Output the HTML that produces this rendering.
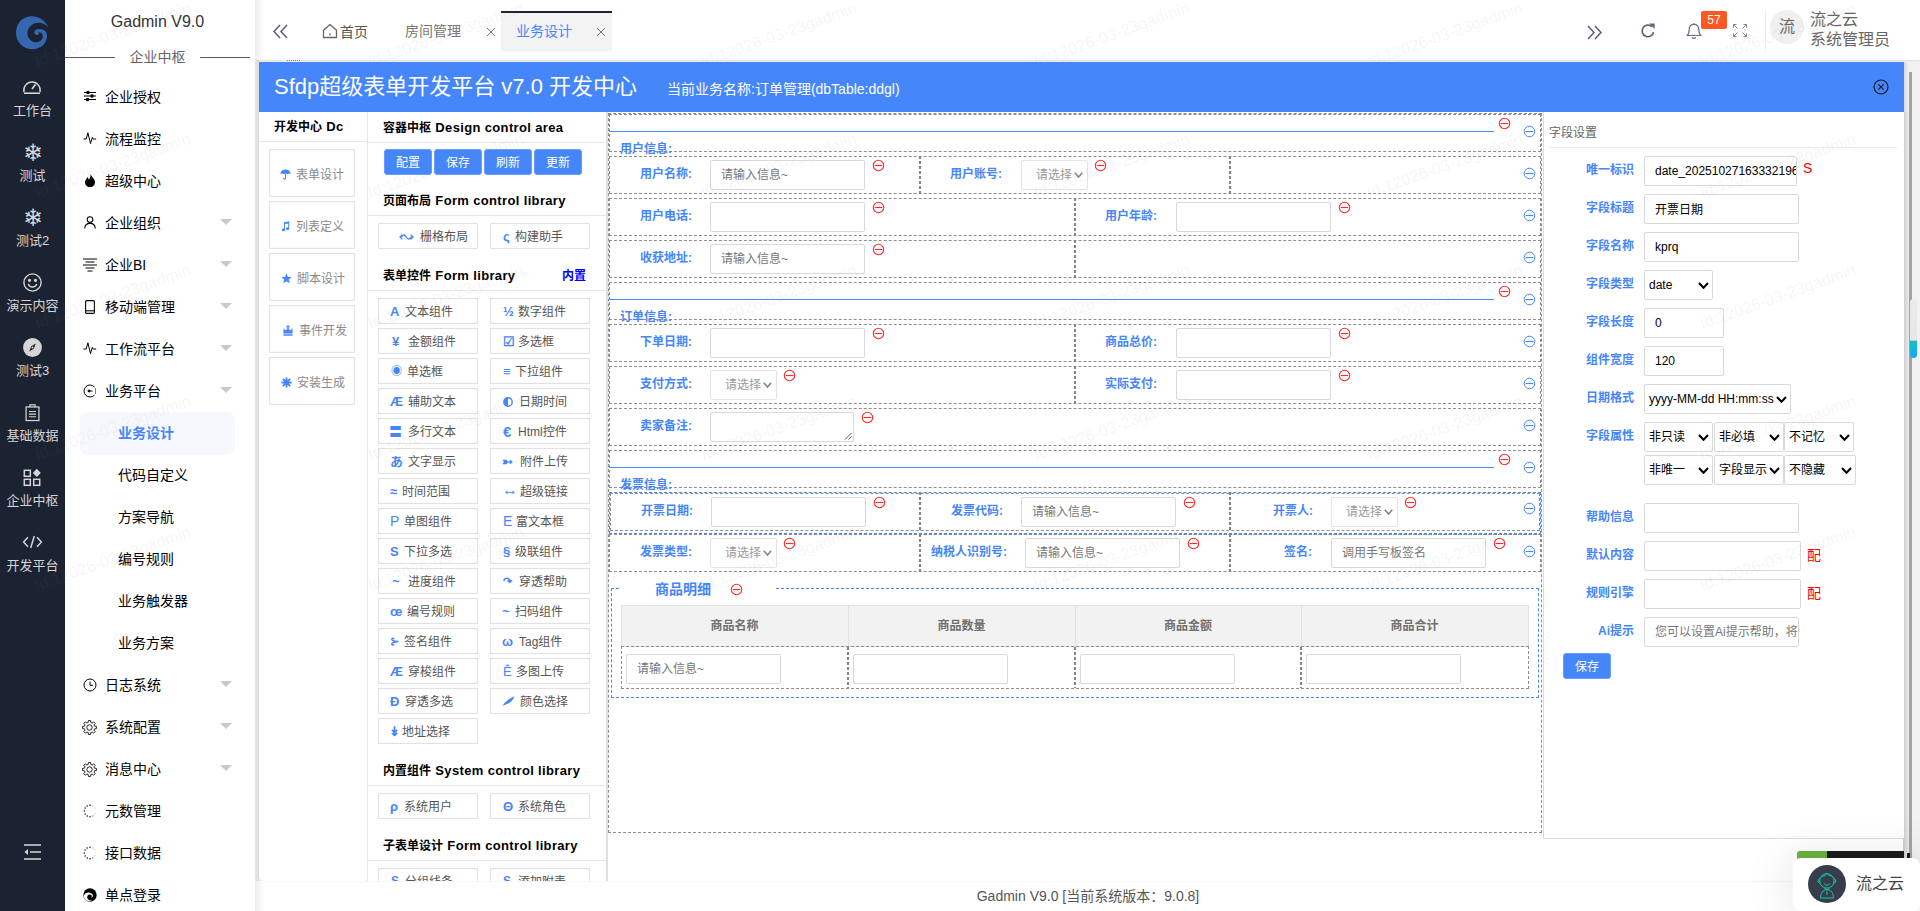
<!DOCTYPE html>
<html lang="zh-CN"><head><meta charset="utf-8"><title>Gadmin V9.0</title>
<style>
*{box-sizing:border-box;margin:0;padding:0}
html,body{width:1920px;height:911px;overflow:hidden;background:#fff}
body{position:relative;font-family:"Liberation Sans","Noto Sans CJK SC",sans-serif;font-size:14px;color:#333}
.abs{position:absolute}
#dark{position:absolute;left:0;top:0;width:65px;height:911px;background:#1b2232}
#dark .it{position:absolute;left:0;width:65px;text-align:center;color:#d6d6d6;font-size:13px;line-height:16px;white-space:nowrap}
#dark svg{position:absolute}
#side{position:absolute;left:65px;top:0;width:190px;height:911px;background:#fff}
#side .mi{position:absolute;left:40px;font-size:14px;color:#000;line-height:20px;white-space:nowrap}
#side .sub{position:absolute;left:53px;font-size:14px;color:#000;line-height:20px;white-space:nowrap}
#side .arr{position:absolute;left:155px;width:0;height:0;border-left:6px solid transparent;border-right:6px solid transparent;border-top:6px solid #c9c9c9}
#side svg{position:absolute}
.t{position:absolute;white-space:nowrap;line-height:1}
.b{font-weight:bold}
.blue{color:#4686fb}
.inp{position:absolute;height:30px;border:1px solid #d9d9d9;border-radius:2px;background:#fff;font-size:12px;color:#777;line-height:28px;padding-left:10px;white-space:nowrap;overflow:hidden}
.sel{position:absolute;height:30px;border:1px solid #e4e4e4;border-radius:2px;background:#fff;font-size:12px;color:#999;line-height:28px;padding-left:14px;white-space:nowrap;overflow:hidden}
.row{position:absolute;left:609px;width:932px;height:38px;border:1px dashed #8e8e8e}
.vsep{position:absolute;width:2px;background:repeating-linear-gradient(180deg,#858585 0,#858585 3px,transparent 3px,transparent 5px)}
.lab{position:absolute;font-size:12px;font-weight:bold;color:#4686fb;white-space:nowrap;line-height:16px;text-align:right}
.cmp{position:absolute;width:100px;height:26px;border:1px solid #e2e2e2;background:#fff;font-size:12px;color:#555;line-height:23px;white-space:nowrap;box-shadow:inset 0 0 2px rgba(0,0,0,.04)}
.cmp i{font-style:normal;color:#4686fb;position:absolute;left:0;top:1px;font-weight:bold}
.cmp span{position:absolute;top:2px}
.hd{position:absolute;font-size:12px;font-weight:bold;color:#000;white-space:nowrap;line-height:16px}
.hd b{font-size:13px;letter-spacing:.35px;margin-left:1px}
.hl{position:absolute;height:1px;background:#e6e6e6}
.card{position:absolute;left:269px;width:86px;height:48px;border:1px solid #e4e4e4;background:#fff;box-shadow:inset 0 0 3px rgba(0,0,0,.05);font-size:12px;color:#8a8a8a;line-height:50px;white-space:nowrap}
.btn{position:absolute;background:#4686fb;color:#fff;font-size:12px;text-align:center;border-radius:3px;white-space:nowrap}
.rl{position:absolute;font-size:12px;font-weight:bold;color:#4686fb;white-space:nowrap;line-height:16px;width:90px;text-align:right;left:1544px}
.ri{position:absolute;height:30px;border:1px solid #d9d9d9;border-radius:2px;background:#fff;font-size:12px;color:#000;line-height:28px;padding-left:10px;white-space:nowrap;overflow:hidden}
.rs{position:absolute;height:30px;border:1px solid #d9d9d9;border-radius:2px;background:#fff;font-size:12px;color:#000;line-height:28px;padding-left:4px;white-space:nowrap;overflow:hidden}
.wm{position:absolute;font-size:16.3px;color:rgba(140,140,140,.085);transform:rotate(-19.5deg);transform-origin:left bottom;white-space:nowrap;pointer-events:none;line-height:1}
</style></head>
<body>
<div id="dark">
<svg style="left:8px;top:8px" width="50" height="50" viewBox="0 0 50 50"><path d="M40.3 19.2 C37.5 12.5 30.5 8.2 24.1 8.2 C14.5 8.2 8 15.5 8 24.7 C8 34 15 41.2 24.7 41.2 C32 41.2 37.5 36.5 38.9 30 C39.6 26.5 38.5 24 36.5 22.5 C34 20.8 30.5 20.5 28.3 21.6 C26.3 22.6 25.6 24.6 26.8 26 C28 27.3 30.6 27.2 31 25.6 C31.2 24.8 30.6 24.3 29.9 24.1 C31.5 23.6 33.5 24.6 34.4 26.5 C35.6 29.2 34.2 32.2 31.2 33.6 C27.5 35.3 23.3 33.8 21 30.5 C18.6 27 19 22.2 21.8 18.8 C24.8 15.2 30 13.9 34.6 15.5 C37 16.3 39 17.8 40.3 19.2 Z" fill="#3567b0"/></svg>
<svg style="left:22px;top:78px" width="20" height="18" viewBox="0 0 20 18" fill="none" stroke="#d6d6d6" stroke-width="1.4"><path d="M2 14 A8.2 8.2 0 1 1 18 14"/><path d="M2 15.2 H18" stroke-width="1.6"/><path d="M10 11 L13.5 6.5" stroke-width="1.8"/></svg>
<div class="it" style="top:103px">工作台</div>
<div class="it" style="top:141px;font-size:24px;line-height:24px">&#10052;</div>
<div class="it" style="top:168px">测试</div>
<div class="it" style="top:206px;font-size:24px;line-height:24px">&#10052;</div>
<div class="it" style="top:233px">测试2</div>
<svg style="left:22px;top:272px" width="21" height="21" viewBox="0 0 21 21" fill="none" stroke="#d6d6d6" stroke-width="1.4"><circle cx="10.5" cy="10.5" r="8.6"/><circle cx="7.5" cy="8.3" r="0.9" fill="#d6d6d6"/><circle cx="13.5" cy="8.3" r="0.9" fill="#d6d6d6"/><path d="M6.2 12 A4.6 4.6 0 0 0 14.8 12"/></svg>
<div class="it" style="top:298px">演示内容</div>
<svg style="left:22px;top:337px" width="21" height="21" viewBox="0 0 21 21"><circle cx="10.5" cy="10.5" r="9.4" fill="#d6d6d6"/><path d="M13.8 6.5 L11.8 11.8 L7.2 14.5 L9.2 9.2 Z" fill="#1b2232"/><circle cx="10.5" cy="10.5" r="1" fill="#d6d6d6"/></svg>
<div class="it" style="top:363px">测试3</div>
<svg style="left:25px;top:404px" width="15" height="17.6" viewBox="0 0 17 20" fill="none" stroke="#d6d6d6" stroke-width="1.4"><rect x="1.2" y="3.4" width="14.6" height="15.4"/><path d="M5.5 3.4 V1 H11.5 V3.4"/><path d="M4.5 8.5 H12.5 M4.5 11.5 H12.5 M4.5 14.5 H12.5" stroke-width="1.2"/></svg>
<div class="it" style="top:428px">基础数据</div>
<svg style="left:23px;top:468px" width="19" height="19" viewBox="0 0 19 19" fill="none" stroke="#d6d6d6" stroke-width="1.5"><rect x="1.3" y="2.3" width="6" height="6"/><rect x="1.3" y="11.3" width="6" height="6"/><rect x="10.7" y="11.3" width="6" height="6"/><path d="M13.8 0.8 L17.8 4.9 L13.8 9 L9.8 4.9 Z" fill="#d6d6d6" stroke="none"/></svg>
<div class="it" style="top:493px">企业中枢</div>
<svg style="left:22px;top:535px" width="21" height="14" viewBox="0 0 21 14" fill="none" stroke="#d6d6d6" stroke-width="1.5"><path d="M6 2.2 L1.6 7 L6 11.8"/><path d="M15 2.2 L19.4 7 L15 11.8"/><path d="M12.3 1 L8.7 13"/></svg>
<div class="it" style="top:558px">开发平台</div>
<svg style="left:23px;top:843px" width="19" height="18" viewBox="0 0 19 18" fill="none" stroke="#d6d6d6" stroke-width="1.6"><path d="M1 2 H18 M7 9 H18 M1 16 H18"/><path d="M5 6 L1.5 9 L5 12 Z" fill="#d6d6d6" stroke="none"/></svg>
</div>
<div id="side">
<div class="t" style="left:0;width:185px;text-align:center;top:13px;font-size:16px;color:#333;line-height:18px">Gadmin V9.0</div>
<div class="abs" style="left:0;top:57px;width:50px;height:1px;background:#555a66"></div>
<div class="abs" style="left:135px;top:57px;width:50px;height:1px;background:#555a66"></div>
<div class="t" style="left:0;width:185px;text-align:center;top:49px;font-size:14px;color:#666;line-height:16px">企业中枢</div>
<svg style="left:19px;top:90px" width="12" height="12" viewBox="0 0 12 12" fill="none" stroke="#000" stroke-width="1.1"><path d="M0 2.5 H12 M0 6 H12 M0 9.5 H12"/><circle cx="4" cy="2.5" r="1.2" fill="#000"/><circle cx="8" cy="6" r="1.2" fill="#000"/><circle cx="3.5" cy="9.5" r="1.2" fill="#000"/></svg>
<div class="mi" style="top:87px">企业授权</div>
<svg style="left:18px;top:132px" width="14" height="12" viewBox="0 0 14 12" fill="none" stroke="#000" stroke-width="1"><path d="M0.5 7 H3.2 L4.9 0.8 L7.5 11.6 L9.3 5.4 L10.2 7 H13.2"/></svg>
<div class="mi" style="top:129px">流程监控</div>
<svg style="left:19px;top:174px" width="12" height="13" viewBox="0 0 12 13"><path d="M6.5 0 C7.5 3 11 5 11 8.5 A5 4.7 0 0 1 1 8.5 C1 6 2.8 5 3.5 3 C4.3 4.2 4.6 5 4.8 5.8 C5.8 4 6.8 2.5 6.5 0 Z" fill="#000"/></svg>
<div class="mi" style="top:171px">超级中心</div>
<svg style="left:19px;top:216px" width="12" height="13" viewBox="0 0 12 13" fill="none" stroke="#000" stroke-width="1.1"><circle cx="6" cy="3.6" r="2.8"/><path d="M0.8 12.5 C0.8 8.5 3 7.4 6 7.4 C9 7.4 11.2 8.5 11.2 12.5"/></svg>
<div class="mi" style="top:213px">企业组织</div>
<div class="arr" style="top:219px"></div>
<svg style="left:18px;top:258px" width="14" height="14" viewBox="0 0 14 14" fill="none" stroke="#000" stroke-width="1"><path d="M0 1 H14 M2.5 4 H11.5 M0 7 H14 M2.5 10 H11.5 M4.5 13 H9.5"/></svg>
<div class="mi" style="top:255px">企业BI</div>
<div class="arr" style="top:261px"></div>
<svg style="left:20px;top:300px" width="10" height="14" viewBox="0 0 10 14" fill="none" stroke="#000" stroke-width="1.1"><rect x="0.6" y="0.6" width="8.8" height="12.8" rx="1.2"/><path d="M0.6 10.8 H9.4"/></svg>
<div class="mi" style="top:297px">移动端管理</div>
<div class="arr" style="top:303px"></div>
<svg style="left:18px;top:342px" width="14" height="12" viewBox="0 0 14 12" fill="none" stroke="#000" stroke-width="1"><path d="M0.5 7 H3.2 L4.9 0.8 L7.5 11.6 L9.3 5.4 L10.2 7 H13.2"/></svg>
<div class="mi" style="top:339px">工作流平台</div>
<div class="arr" style="top:345px"></div>
<svg style="left:18px;top:384px" width="14" height="14" viewBox="0 0 14 14" fill="none" stroke="#000" stroke-width="1"><path d="M11.5 3 A6 6 0 1 0 11.5 11" /><path d="M12.5 4.5 V9.5" stroke-dasharray="1 1"/><circle cx="6" cy="7" r="1" fill="#000"/><path d="M6 7 H9.5"/></svg>
<div class="mi" style="top:381px">业务平台</div>
<div class="arr" style="top:387px"></div>
<div class="abs" style="left:15px;top:412px;width:155px;height:43px;background:#f6f8fe;border-radius:8px"></div>
<div class="sub" style="top:423px;color:#4686fb;font-weight:bold">业务设计</div>
<div class="sub" style="top:465px;">代码自定义</div>
<div class="sub" style="top:507px;">方案导航</div>
<div class="sub" style="top:549px;">编号规则</div>
<div class="sub" style="top:591px;">业务触发器</div>
<div class="sub" style="top:633px;">业务方案</div>
<svg style="left:18px;top:678px" width="14" height="14" viewBox="0 0 14 14" fill="none" stroke="#000" stroke-width="1"><circle cx="7" cy="7" r="6"/><path d="M7 3.5 V7.3 H10"/></svg>
<div class="mi" style="top:675px">日志系统</div>
<div class="arr" style="top:681px"></div>
<svg style="left:17px;top:720px" width="15" height="15" viewBox="0 0 15 15" fill="none" stroke="#222" stroke-width="1" stroke-linejoin="round"><circle cx="7.5" cy="7.5" r="2.7"/><path d="M6.16 2.47 L6.38 0.59 L8.62 0.59 L8.84 2.47 L10.11 3.00 L11.60 1.82 L13.18 3.40 L12.00 4.89 L12.53 6.16 L14.41 6.38 L14.41 8.62 L12.53 8.84 L12.00 10.11 L13.18 11.60 L11.60 13.18 L10.11 12.00 L8.84 12.53 L8.62 14.41 L6.38 14.41 L6.16 12.53 L4.89 12.00 L3.40 13.18 L1.82 11.60 L3.00 10.11 L2.47 8.84 L0.59 8.62 L0.59 6.38 L2.47 6.16 L3.00 4.89 L1.82 3.40 L3.40 1.82 L4.89 3.00 Z"/></svg>
<div class="mi" style="top:717px">系统配置</div>
<div class="arr" style="top:723px"></div>
<svg style="left:17px;top:762px" width="15" height="15" viewBox="0 0 15 15" fill="none" stroke="#222" stroke-width="1" stroke-linejoin="round"><circle cx="7.5" cy="7.5" r="2.7"/><path d="M6.16 2.47 L6.38 0.59 L8.62 0.59 L8.84 2.47 L10.11 3.00 L11.60 1.82 L13.18 3.40 L12.00 4.89 L12.53 6.16 L14.41 6.38 L14.41 8.62 L12.53 8.84 L12.00 10.11 L13.18 11.60 L11.60 13.18 L10.11 12.00 L8.84 12.53 L8.62 14.41 L6.38 14.41 L6.16 12.53 L4.89 12.00 L3.40 13.18 L1.82 11.60 L3.00 10.11 L2.47 8.84 L0.59 8.62 L0.59 6.38 L2.47 6.16 L3.00 4.89 L1.82 3.40 L3.40 1.82 L4.89 3.00 Z"/></svg>
<div class="mi" style="top:759px">消息中心</div>
<div class="arr" style="top:765px"></div>
<svg style="left:18px;top:804px" width="14" height="14" viewBox="0 0 14 14"><g fill="#000"><circle cx="7.0" cy="1.3" r="0.75" opacity="1"/><circle cx="9.8" cy="2.1" r="0.75" opacity="0.25"/><circle cx="11.9" cy="4.1" r="0.75" opacity="0.15"/><circle cx="12.7" cy="7.0" r="0.75" opacity="0.1"/><circle cx="11.9" cy="9.8" r="0.75" opacity="0.2"/><circle cx="9.8" cy="11.9" r="0.75" opacity="0.5"/><circle cx="7.0" cy="12.7" r="0.75" opacity="1"/><circle cx="4.2" cy="11.9" r="0.75" opacity="1"/><circle cx="2.1" cy="9.9" r="0.75" opacity="1"/><circle cx="1.3" cy="7.0" r="0.75" opacity="1"/><circle cx="2.1" cy="4.1" r="0.75" opacity="1"/><circle cx="4.1" cy="2.1" r="0.75" opacity="1"/></g></svg>
<div class="mi" style="top:801px">元数管理</div>
<svg style="left:18px;top:846px" width="14" height="14" viewBox="0 0 14 14"><g fill="#000"><circle cx="7.0" cy="1.3" r="0.75" opacity="1"/><circle cx="9.8" cy="2.1" r="0.75" opacity="0.25"/><circle cx="11.9" cy="4.1" r="0.75" opacity="0.15"/><circle cx="12.7" cy="7.0" r="0.75" opacity="0.1"/><circle cx="11.9" cy="9.8" r="0.75" opacity="0.2"/><circle cx="9.8" cy="11.9" r="0.75" opacity="0.5"/><circle cx="7.0" cy="12.7" r="0.75" opacity="1"/><circle cx="4.2" cy="11.9" r="0.75" opacity="1"/><circle cx="2.1" cy="9.9" r="0.75" opacity="1"/><circle cx="1.3" cy="7.0" r="0.75" opacity="1"/><circle cx="2.1" cy="4.1" r="0.75" opacity="1"/><circle cx="4.1" cy="2.1" r="0.75" opacity="1"/></g></svg>
<div class="mi" style="top:843px">接口数据</div>
<svg style="left:18px;top:888px" width="14" height="14" viewBox="0 0 14 14"><circle cx="7" cy="7" r="6.7" fill="#000"/><path d="M0.8 7.6 C2 4.4 5.8 3.6 8.6 5.4 C10.6 6.8 10.2 9.4 8 9.8 C9.4 8.6 8.8 6.8 7 6.6 C4.8 6.4 3.6 8.6 4.6 10.6 C5.4 12.2 7.4 12.9 9.6 12.2 C6 14.6 0.4 12.2 0.8 7.6 Z" fill="#fff"/></svg>
<div class="mi" style="top:885px">单点登录</div>
</div>
<div class="abs" style="left:255px;top:60px;width:1665px;height:851px;background:#f2f2f2"></div>
<div class="abs" style="left:255px;top:60px;width:4px;height:821px;background:linear-gradient(90deg,#e6e6e6,#dcdcdc)"></div>
<div class="abs" style="left:256px;top:0;width:1664px;height:60px;background:#fff;box-shadow:0 1px 2px rgba(0,0,0,.08)"></div>
<div class="abs" style="left:255px;top:0;width:8px;height:60px;background:linear-gradient(90deg,#ececec,#fff)"></div>
<svg class="abs" style="left:272px;top:24px" width="17" height="15" viewBox="0 0 17 15" fill="none" stroke="#56607a" stroke-width="1.5"><path d="M8 1 L2 7.5 L8 14"/><path d="M15 1 L9 7.5 L15 14"/></svg>
<svg class="abs" style="left:322px;top:23px" width="16" height="16" viewBox="0 0 16 16" fill="none" stroke="#666" stroke-width="1.3"><path d="M1.5 7.2 L8 1.5 L14.5 7.2 V14.5 H1.5 Z" stroke-linejoin="round"/><path d="M8 10.5 V12.5"/></svg>
<div class="t" style="left:340px;top:24px;font-size:14px;color:#555;line-height:16px">首页</div>
<div class="t" style="left:405px;top:23px;font-size:14px;color:#777;line-height:16px">房间管理</div>
<svg class="abs" style="left:486px;top:27px" width="10" height="10" viewBox="0 0 10 10" stroke="#777" stroke-width="1"><path d="M1 1 L9 9 M9 1 L1 9"/></svg>
<div class="abs" style="left:501px;top:11px;width:111px;height:40px;background:#f3f3f3;border-top:2px solid #1b2232"></div>
<div class="t" style="left:516px;top:23px;font-size:14px;color:#4686fb;line-height:16px">业务设计</div>
<svg class="abs" style="left:596px;top:27px" width="10" height="10" viewBox="0 0 10 10" stroke="#777" stroke-width="1"><path d="M1 1 L9 9 M9 1 L1 9"/></svg>
<svg class="abs" style="left:1586px;top:25px" width="17" height="15" viewBox="0 0 17 15" fill="none" stroke="#56607a" stroke-width="1.5"><path d="M2 1 L8 7.5 L2 14"/><path d="M9 1 L15 7.5 L9 14"/></svg>
<svg class="abs" style="left:1640px;top:23px" width="16" height="16" viewBox="0 0 16 16" fill="none" stroke="#5a6478" stroke-width="1.7"><path d="M13.6 9.2 A5.8 5.8 0 1 1 11.8 3.6"/><path d="M9.2 0.6 H14.6 V6 Z" fill="#5a6478" stroke="none"/></svg>
<svg class="abs" style="left:1686px;top:22px" width="16" height="18" viewBox="0 0 16 18" fill="none" stroke="#66728a" stroke-width="1.2"><path d="M1 13.5 H15 C13 12 12.8 10.5 12.8 7.5 C12.8 4 10.8 2.3 8 2.3 C5.2 2.3 3.2 4 3.2 7.5 C3.2 10.5 3 12 1 13.5 Z" stroke-linejoin="round"/><path d="M6.3 15.3 A1.8 1.8 0 0 0 9.7 15.3"/><path d="M8 2.3 V1"/></svg>
<div class="abs" style="left:1701px;top:11px;width:26px;height:18px;background:#ff5722;border-radius:2px;color:#fff;font-size:12px;line-height:18px;text-align:center">57</div>
<svg class="abs" style="left:1733px;top:24px" width="14" height="13" viewBox="0 0 14 13" fill="none" stroke="#7b879c" stroke-width="1"><path d="M0.5 3.5 V0.5 H3.5 M0.5 0.5 L4.5 4.5 M10.5 0.5 H13.5 V3.5 M13.5 0.5 L9.5 4.5 M0.5 9.5 V12.5 H3.5 M0.5 12.5 L4.5 8.5 M13.5 9.5 V12.5 H10.5 M13.5 12.5 L9.5 8.5"/></svg>
<div class="abs" style="left:1765px;top:10px;width:1px;height:40px;background:#eee"></div>
<div class="abs" style="left:1770px;top:10px;width:34px;height:34px;border-radius:17px;background:#f0f0f0;color:#666;font-size:16px;line-height:34px;text-align:center">流</div>
<div class="t" style="left:1810px;top:11px;font-size:16px;color:#666;line-height:18px">流之云</div>
<div class="t" style="left:1810px;top:31px;font-size:16px;color:#666;line-height:18px">系统管理员</div>
<div class="abs" style="left:287px;top:60px;width:13px;height:0;border-top:1px dotted #4686fb"></div>
<div class="abs" style="left:259px;top:62px;width:1645px;height:819px;background:#fff;border-radius:0 0 0 6px"></div>
<div class="abs" style="left:259px;top:62px;width:1645px;height:50px;background:#4686fb"></div>
<div class="t" style="left:274px;top:74px;font-size:22px;color:#fff;line-height:26px">Sfdp超级表单开发平台 v7.0 开发中心</div>
<div class="t" style="left:667px;top:81px;font-size:14px;color:#fff;line-height:16px">当前业务名称:订单管理(dbTable:ddgl)</div>
<svg class="abs" style="left:1873px;top:79px" width="16" height="16" viewBox="0 0 16 16" fill="none" stroke="#10151f" stroke-width="1.1"><circle cx="8" cy="8" r="7"/><path d="M5.4 5.4 L10.6 10.6 M10.6 5.4 L5.4 10.6"/></svg>
<div class="abs" style="left:1903px;top:112px;width:6px;height:770px;background:linear-gradient(90deg,#c9c9c9,#ececec)"></div>
<div class="abs" style="left:1904px;top:62px;width:5px;height:50px;background:linear-gradient(90deg,#d8d8d8,#f2f2f2)"></div>
<div class="abs" style="left:1909px;top:72px;width:3px;height:810px;background:#a3a3a3"></div>
<div class="abs" style="left:1910px;top:299px;width:7px;height:59px;border-radius:4px;background:linear-gradient(180deg,#ececec 0,#e6e6e6 70%,#14c2bd 71%,#1aa6f5 100%)"></div>
<div class="abs" style="left:255px;top:881px;width:1665px;height:30px;background:#fff;border-top:1px solid #f6f6f6"></div>
<div class="abs" style="left:255px;top:881px;width:9px;height:30px;background:linear-gradient(90deg,#ececec,#fff)"></div>
<div class="t" style="left:256px;width:1664px;text-align:center;top:888px;font-size:14px;color:#555;line-height:16px">Gadmin V9.0 [当前系统版本：9.0.8]</div>
<div class="hd" style="left:274px;top:119px">开发中心 <b>Dc</b></div>
<div class="hl" style="left:259px;top:141px;width:108px"></div>
<div class="abs" style="left:367px;top:112px;width:1px;height:769px;background:#e6e6e6"></div>
<div class="card" style="top:149px"><svg style="position:absolute;left:10px;top:19px" width="11" height="11" viewBox="0 0 11 11"><path d="M0.3 5 C0.8 1.8 3 0.6 5.5 0.6 C8 0.6 10.2 1.8 10.7 5 C9.6 4.2 8.4 4.2 7.3 5 C6.6 4.3 4.4 4.3 3.7 5 C2.6 4.2 1.4 4.2 0.3 5 Z" fill="#4686fb"/><path d="M5.5 4.5 V9 C5.5 10.4 3.6 10.4 3.6 9" fill="none" stroke="#4686fb" stroke-width="1.1"/></svg><span style="position:absolute;left:26px;top:0">表单设计</span></div>
<div class="card" style="top:201px"><svg style="position:absolute;left:11px;top:19px" width="9" height="11" viewBox="0 0 9 11"><path d="M3 1.2 L8.2 0.3 V7.6 A1.6 1.4 0 1 1 7.2 6.4 V2.4 L4 3 V8.8 A1.6 1.4 0 1 1 3 7.6 Z" fill="#4686fb"/></svg><span style="position:absolute;left:26px;top:0">列表定义</span></div>
<div class="card" style="top:253px"><svg style="position:absolute;left:11px;top:19px" width="11" height="11" viewBox="0 0 11 11"><path d="M5.5 0.3 L6.9 3.9 L10.8 4.1 L7.8 6.5 L8.8 10.3 L5.5 8.2 L2.2 10.3 L3.2 6.5 L0.2 4.1 L4.1 3.9 Z" fill="#4686fb"/></svg><span style="position:absolute;left:27px;top:0">脚本设计</span></div>
<div class="card" style="top:305px"><svg style="position:absolute;left:13px;top:19px" width="10" height="11" viewBox="0 0 10 11"><path d="M4.4 0 H5.6 V1.2 H6.8 V2.3 H5.6 V3.6 L7.2 5.4 L9.6 3.6 V8.4 H0.4 V3.6 L2.8 5.4 L4.4 3.6 V2.3 H3.2 V1.2 H4.4 Z M0.4 9.2 H9.6 V10.8 H0.4 Z" fill="#4686fb"/></svg><span style="position:absolute;left:29px;top:0">事件开发</span></div>
<div class="card" style="top:357px"><svg style="position:absolute;left:11px;top:19px" width="11" height="11" viewBox="0 0 11 11" stroke="#4686fb" stroke-width="1.9"><path d="M5.5 0.4 V10.6 M0.4 5.5 H10.6 M1.9 1.9 L9.1 9.1 M9.1 1.9 L1.9 9.1"/></svg><span style="position:absolute;left:27px;top:0">安装生成</span></div>
<div class="abs" style="left:606px;top:112px;width:2px;height:769px;background:#e0e0e0"></div>
<div class="hd" style="left:383px;top:120px">容器中枢 <b>Design control area</b></div>
<div class="hl" style="left:368px;top:142px;width:238px"></div>
<div class="btn" style="left:384px;top:149px;width:48px;height:26px;line-height:26px;border:1px solid #6a9dfc">配置</div>
<div class="btn" style="left:434px;top:149px;width:48px;height:26px;line-height:26px;border:1px solid #6a9dfc">保存</div>
<div class="btn" style="left:484px;top:149px;width:48px;height:26px;line-height:26px;border:1px solid #6a9dfc">刷新</div>
<div class="btn" style="left:534px;top:149px;width:48px;height:26px;line-height:26px;border:1px solid #6a9dfc">更新</div>
<div class="hd" style="left:383px;top:193px">页面布局 <b>Form control library</b></div>
<div class="hl" style="left:368px;top:215px;width:238px"></div>
<div class="cmp" style="left:378px;top:223px"><i style="left:20px;font-size:13px"><svg width="15" height="8" viewBox="0 0 15 8" style="position:absolute;left:0;top:8px" fill="none" stroke="#4686fb" stroke-width="1.3"><path d="M3.4 1.6 L1 4 L3.4 6.4 M1 4 C3 4 3.6 2 5.2 2 C7 2 7.6 6 9.4 6 C11 6 11.4 4 14 4 M11.6 1.6 L14 4 L11.6 6.4"/></svg></i><span style="left:41px">栅格布局</span></div>
<div class="cmp" style="left:490px;top:223px"><i style="left:12px;font-size:13px">&#962;</i><span style="left:24px">构建助手</span></div>
<div class="hd" style="left:383px;top:268px">表单控件 <b>Form library</b></div>
<div class="hd" style="left:562px;top:268px;font-size:12px;color:#0000ff">内置</div>
<div class="hl" style="left:368px;top:290px;width:238px"></div>
<div class="cmp" style="left:378px;top:298px"><i style="left:11px;font-size:13px">A</i><span style="left:26px">文本组件</span></div>
<div class="cmp" style="left:490px;top:298px"><i style="left:12px;font-size:13px">&#189;</i><span style="left:27px">数字组件</span></div>
<div class="cmp" style="left:378px;top:328px"><i style="left:13px;font-size:13px">&#165;</i><span style="left:29px">金额组件</span></div>
<div class="cmp" style="left:490px;top:328px"><i style="left:12px;font-size:13px">&#9745;</i><span style="left:27px">多选框</span></div>
<div class="cmp" style="left:378px;top:358px"><i style="left:12px;font-size:11px">&#9673;</i><span style="left:28px">单选框</span></div>
<div class="cmp" style="left:490px;top:358px"><i style="left:12px;font-size:13px">&#8801;</i><span style="left:24px">下拉组件</span></div>
<div class="cmp" style="left:378px;top:388px"><i style="left:11px;font-size:13px">&#198;</i><span style="left:29px">辅助文本</span></div>
<div class="cmp" style="left:490px;top:388px"><i style="left:12px;font-size:13px"><svg width="10" height="10" viewBox="0 0 10 10" style="position:absolute;left:0;top:7px"><circle cx="5" cy="5" r="4.2" fill="none" stroke="#4686fb" stroke-width="1.4"/><path d="M5 0.8 A4.2 4.2 0 0 0 5 9.2 Z" fill="#4686fb"/></svg></i><span style="left:28px">日期时间</span></div>
<div class="cmp" style="left:378px;top:418px"><i style="left:10px;font-size:13px">&#12307;</i><span style="left:29px">多行文本</span></div>
<div class="cmp" style="left:490px;top:418px"><i style="left:12px;font-size:15px">&#8364;</i><span style="left:27px">Html控件</span></div>
<div class="cmp" style="left:378px;top:448px"><i style="left:11px;font-size:13px">&#12354;</i><span style="left:29px">文字显示</span></div>
<div class="cmp" style="left:490px;top:448px"><i style="left:11px;font-size:13px">&#10163;</i><span style="left:29px">附件上传</span></div>
<div class="cmp" style="left:378px;top:478px"><i style="left:11px;font-size:13px">&#8776;</i><span style="left:23px">时间范围</span></div>
<div class="cmp" style="left:490px;top:478px"><i style="left:11px;font-size:16px"><span style="position:relative;top:-2px">&#8596;</span></i><span style="left:29px">超级链接</span></div>
<div class="cmp" style="left:378px;top:508px"><i style="left:11px;font-size:13px"><span style="font-weight:normal;position:static;font-size:14px">P</span></i><span style="left:25px">单图组件</span></div>
<div class="cmp" style="left:490px;top:508px"><i style="left:12px;font-size:13px"><span style="font-weight:normal;position:static;font-size:14px">E</span></i><span style="left:25px">富文本框</span></div>
<div class="cmp" style="left:378px;top:538px"><i style="left:11px;font-size:13px">S</i><span style="left:25px">下拉多选</span></div>
<div class="cmp" style="left:490px;top:538px"><i style="left:12px;font-size:13px">&#167;</i><span style="left:24px">级联组件</span></div>
<div class="cmp" style="left:378px;top:568px"><i style="left:13px;font-size:13px">~</i><span style="left:29px">进度组件</span></div>
<div class="cmp" style="left:490px;top:568px"><i style="left:12px;font-size:11px">&#8631;</i><span style="left:28px">穿透帮助</span></div>
<div class="cmp" style="left:378px;top:598px"><i style="left:11px;font-size:13px">&#339;</i><span style="left:28px">编号规则</span></div>
<div class="cmp" style="left:490px;top:598px"><i style="left:11px;font-size:13px">~</i><span style="left:24px">扫码组件</span></div>
<div class="cmp" style="left:378px;top:628px"><i style="left:11px;font-size:11px">&#8881;</i><span style="left:25px">签名组件</span></div>
<div class="cmp" style="left:490px;top:628px"><i style="left:11px;font-size:13px">&#969;</i><span style="left:28px">Tag组件</span></div>
<div class="cmp" style="left:378px;top:658px"><i style="left:11px;font-size:13px">&#198;</i><span style="left:29px">穿梭组件</span></div>
<div class="cmp" style="left:490px;top:658px"><i style="left:12px;font-size:13px"><span style="font-weight:normal;position:static;font-size:13px">&#202;</span></i><span style="left:25px">多图上传</span></div>
<div class="cmp" style="left:378px;top:688px"><i style="left:11px;font-size:13px">&#208;</i><span style="left:26px">穿透多选</span></div>
<div class="cmp" style="left:490px;top:688px"><i style="left:11px;font-size:13px"><svg width="13" height="11" viewBox="0 0 13 11" style="position:absolute;left:0;top:6px"><path d="M0.3 10.3 C1.6 8 3 6.6 4.2 5.6 C6.4 3.4 9.4 1.2 12.4 0.4 C11.4 3.4 9 6 6.2 7.6 C4.6 8.4 2.6 9 0.3 10.3 Z" fill="#4686fb"/></svg></i><span style="left:29px">颜色选择</span></div>
<div class="cmp" style="left:378px;top:718px"><i style="left:10px;font-size:13px">&#8609;</i><span style="left:23px">地址选择</span></div>
<div class="hd" style="left:383px;top:763px">内置组件 <b>System control library</b></div>
<div class="hl" style="left:368px;top:785px;width:238px"></div>
<div class="cmp" style="left:378px;top:793px"><i style="left:11px;font-size:13px">&#961;</i><span style="left:25px">系统用户</span></div>
<div class="cmp" style="left:490px;top:793px"><i style="left:12px;font-size:13px">&#920;</i><span style="left:27px">系统角色</span></div>
<div class="hd" style="left:383px;top:838px">子表单设计 <b>Form control library</b></div>
<div class="hl" style="left:368px;top:860px;width:238px"></div>
<div class="abs" style="left:368px;top:861px;width:238px;height:20px;overflow:hidden"><div class="cmp" style="left:10px;top:7px"><i style="left:12px">S</i><span style="left:26px">分组线条</span></div><div class="cmp" style="left:122px;top:7px"><i style="left:12px">S</i><span style="left:27px">添加附表</span></div></div>
<div class="abs" style="left:608px;top:113px;width:934px;height:720px;border:1px dashed #8e8e8e"></div>
<div class="row" style="top:114px"></div>
<svg class="abs" style="left:1523.4px;top:125.0px" width="13" height="13" viewBox="0 0 13 13" fill="none" stroke="#4686fb" stroke-width="1.0"><circle cx="6.5" cy="6.5" r="5.3"/><path d="M2.6 6.5 H10.4"/></svg>
<div class="abs" style="left:610px;top:131px;width:884px;height:1px;background:#4686fb"></div>
<svg class="abs" style="left:1498.1px;top:116.9px" width="13" height="13" viewBox="0 0 13 13" fill="none" stroke="#ff2a2a" stroke-width="1.1"><circle cx="6.5" cy="6.5" r="5.2"/><path d="M2.7 6.5 H10.3"/></svg>
<div class="lab" style="left:620px;top:141px">用户信息:</div>
<div class="row" style="top:156px"></div>
<svg class="abs" style="left:1523.4px;top:167.0px" width="13" height="13" viewBox="0 0 13 13" fill="none" stroke="#4686fb" stroke-width="1.0"><circle cx="6.5" cy="6.5" r="5.3"/><path d="M2.6 6.5 H10.4"/></svg>
<div class="vsep" style="left:919px;top:156px;height:38px"></div>
<div class="vsep" style="left:1229px;top:156px;height:38px"></div>
<div class="lab" style="left:609px;top:166px;width:83px">用户名称:</div>
<div class="inp" style="left:710px;top:160px;width:155px">请输入信息~</div>
<svg class="abs" style="left:872.0px;top:159.0px" width="13" height="13" viewBox="0 0 13 13" fill="none" stroke="#ff2a2a" stroke-width="1.1"><circle cx="6.5" cy="6.5" r="5.2"/><path d="M2.7 6.5 H10.3"/></svg>
<div class="lab" style="left:919px;top:166px;width:83px">用户账号:</div>
<div class="sel" style="left:1021px;top:160px;width:67px">请选择</div>
<svg class="abs" style="left:1074.0px;top:172.0px" width="9" height="6" viewBox="0 0 9 6" fill="none" stroke="#888" stroke-width="1.7"><path d="M0.8 0.8 L4.5 5.0 L8.2 0.8"/></svg>
<svg class="abs" style="left:1094.0px;top:159.0px" width="13" height="13" viewBox="0 0 13 13" fill="none" stroke="#ff2a2a" stroke-width="1.1"><circle cx="6.5" cy="6.5" r="5.2"/><path d="M2.7 6.5 H10.3"/></svg>
<div class="row" style="top:198px"></div>
<svg class="abs" style="left:1523.4px;top:209.0px" width="13" height="13" viewBox="0 0 13 13" fill="none" stroke="#4686fb" stroke-width="1.0"><circle cx="6.5" cy="6.5" r="5.3"/><path d="M2.6 6.5 H10.4"/></svg>
<div class="vsep" style="left:1074px;top:198px;height:38px"></div>
<div class="lab" style="left:609px;top:208px;width:83px">用户电话:</div>
<div class="inp" style="left:710px;top:202px;width:155px"></div>
<svg class="abs" style="left:872.0px;top:201.0px" width="13" height="13" viewBox="0 0 13 13" fill="none" stroke="#ff2a2a" stroke-width="1.1"><circle cx="6.5" cy="6.5" r="5.2"/><path d="M2.7 6.5 H10.3"/></svg>
<div class="lab" style="left:1074px;top:208px;width:83px">用户年龄:</div>
<div class="inp" style="left:1176px;top:202px;width:155px"></div>
<svg class="abs" style="left:1338.0px;top:201.0px" width="13" height="13" viewBox="0 0 13 13" fill="none" stroke="#ff2a2a" stroke-width="1.1"><circle cx="6.5" cy="6.5" r="5.2"/><path d="M2.7 6.5 H10.3"/></svg>
<div class="row" style="top:240px"></div>
<svg class="abs" style="left:1523.4px;top:251.0px" width="13" height="13" viewBox="0 0 13 13" fill="none" stroke="#4686fb" stroke-width="1.0"><circle cx="6.5" cy="6.5" r="5.3"/><path d="M2.6 6.5 H10.4"/></svg>
<div class="vsep" style="left:1074px;top:240px;height:38px"></div>
<div class="lab" style="left:609px;top:250px;width:83px">收获地址:</div>
<div class="inp" style="left:710px;top:244px;width:155px">请输入信息~</div>
<svg class="abs" style="left:872.0px;top:243.0px" width="13" height="13" viewBox="0 0 13 13" fill="none" stroke="#ff2a2a" stroke-width="1.1"><circle cx="6.5" cy="6.5" r="5.2"/><path d="M2.7 6.5 H10.3"/></svg>
<div class="row" style="top:282px"></div>
<svg class="abs" style="left:1523.4px;top:293.0px" width="13" height="13" viewBox="0 0 13 13" fill="none" stroke="#4686fb" stroke-width="1.0"><circle cx="6.5" cy="6.5" r="5.3"/><path d="M2.6 6.5 H10.4"/></svg>
<div class="abs" style="left:610px;top:299px;width:884px;height:1px;background:#4686fb"></div>
<svg class="abs" style="left:1498.1px;top:284.9px" width="13" height="13" viewBox="0 0 13 13" fill="none" stroke="#ff2a2a" stroke-width="1.1"><circle cx="6.5" cy="6.5" r="5.2"/><path d="M2.7 6.5 H10.3"/></svg>
<div class="lab" style="left:620px;top:309px">订单信息:</div>
<div class="row" style="top:324px"></div>
<svg class="abs" style="left:1523.4px;top:335.0px" width="13" height="13" viewBox="0 0 13 13" fill="none" stroke="#4686fb" stroke-width="1.0"><circle cx="6.5" cy="6.5" r="5.3"/><path d="M2.6 6.5 H10.4"/></svg>
<div class="vsep" style="left:1074px;top:324px;height:38px"></div>
<div class="lab" style="left:609px;top:334px;width:83px">下单日期:</div>
<div class="inp" style="left:710px;top:328px;width:155px"></div>
<svg class="abs" style="left:872.0px;top:327.0px" width="13" height="13" viewBox="0 0 13 13" fill="none" stroke="#ff2a2a" stroke-width="1.1"><circle cx="6.5" cy="6.5" r="5.2"/><path d="M2.7 6.5 H10.3"/></svg>
<div class="lab" style="left:1074px;top:334px;width:83px">商品总价:</div>
<div class="inp" style="left:1176px;top:328px;width:155px"></div>
<svg class="abs" style="left:1338.0px;top:327.0px" width="13" height="13" viewBox="0 0 13 13" fill="none" stroke="#ff2a2a" stroke-width="1.1"><circle cx="6.5" cy="6.5" r="5.2"/><path d="M2.7 6.5 H10.3"/></svg>
<div class="row" style="top:366px"></div>
<svg class="abs" style="left:1523.4px;top:377.0px" width="13" height="13" viewBox="0 0 13 13" fill="none" stroke="#4686fb" stroke-width="1.0"><circle cx="6.5" cy="6.5" r="5.3"/><path d="M2.6 6.5 H10.4"/></svg>
<div class="vsep" style="left:1074px;top:366px;height:38px"></div>
<div class="lab" style="left:609px;top:376px;width:83px">支付方式:</div>
<div class="sel" style="left:710px;top:370px;width:67px">请选择</div>
<svg class="abs" style="left:763.0px;top:382.0px" width="9" height="6" viewBox="0 0 9 6" fill="none" stroke="#888" stroke-width="1.7"><path d="M0.8 0.8 L4.5 5.0 L8.2 0.8"/></svg>
<svg class="abs" style="left:783.0px;top:369.0px" width="13" height="13" viewBox="0 0 13 13" fill="none" stroke="#ff2a2a" stroke-width="1.1"><circle cx="6.5" cy="6.5" r="5.2"/><path d="M2.7 6.5 H10.3"/></svg>
<div class="lab" style="left:1074px;top:376px;width:83px">实际支付:</div>
<div class="inp" style="left:1176px;top:370px;width:155px"></div>
<svg class="abs" style="left:1338.0px;top:369.0px" width="13" height="13" viewBox="0 0 13 13" fill="none" stroke="#ff2a2a" stroke-width="1.1"><circle cx="6.5" cy="6.5" r="5.2"/><path d="M2.7 6.5 H10.3"/></svg>
<div class="row" style="top:408px"></div>
<svg class="abs" style="left:1523.4px;top:419.0px" width="13" height="13" viewBox="0 0 13 13" fill="none" stroke="#4686fb" stroke-width="1.0"><circle cx="6.5" cy="6.5" r="5.3"/><path d="M2.6 6.5 H10.4"/></svg>
<div class="lab" style="left:609px;top:418px;width:83px">卖家备注:</div>
<div class="inp" style="left:710px;top:412px;width:144px;height:30px"></div>
<svg class="abs" style="left:844px;top:432px" width="8" height="8" viewBox="0 0 8 8" stroke="#555" stroke-width="1"><path d="M7.5 1 L1 7.5 M7.5 4.5 L4.5 7.5"/></svg>
<svg class="abs" style="left:861.0px;top:411.0px" width="13" height="13" viewBox="0 0 13 13" fill="none" stroke="#ff2a2a" stroke-width="1.1"><circle cx="6.5" cy="6.5" r="5.2"/><path d="M2.7 6.5 H10.3"/></svg>
<div class="row" style="top:450px"></div>
<svg class="abs" style="left:1523.4px;top:461.0px" width="13" height="13" viewBox="0 0 13 13" fill="none" stroke="#4686fb" stroke-width="1.0"><circle cx="6.5" cy="6.5" r="5.3"/><path d="M2.6 6.5 H10.4"/></svg>
<div class="abs" style="left:610px;top:467px;width:884px;height:1px;background:#4686fb"></div>
<svg class="abs" style="left:1498.1px;top:452.9px" width="13" height="13" viewBox="0 0 13 13" fill="none" stroke="#ff2a2a" stroke-width="1.1"><circle cx="6.5" cy="6.5" r="5.2"/><path d="M2.7 6.5 H10.3"/></svg>
<div class="lab" style="left:620px;top:477px">发票信息:</div>
<div class="abs" style="left:609px;top:492px;width:932px;height:42px;border:1px dashed #4686fb;border-bottom:none"></div>
<div class="abs" style="left:609px;top:533px;width:932px;height:2px;background:repeating-linear-gradient(90deg,#4686fb 0,#4686fb 3px,transparent 3px,transparent 5px)"></div>
<div class="row" style="left:610px;width:930px;top:493px"></div>
<svg class="abs" style="left:1522.5px;top:502.0px" width="13" height="13" viewBox="0 0 13 13" fill="none" stroke="#4686fb" stroke-width="1.0"><circle cx="6.5" cy="6.5" r="5.3"/><path d="M2.6 6.5 H10.4"/></svg>
<div class="vsep" style="left:919px;top:492px;height:38px"></div>
<div class="vsep" style="left:1229px;top:492px;height:38px"></div>
<div class="lab" style="left:610px;top:503px;width:83px">开票日期:</div>
<div class="inp" style="left:711px;top:497px;width:155px"></div>
<svg class="abs" style="left:873.0px;top:496.0px" width="13" height="13" viewBox="0 0 13 13" fill="none" stroke="#ff2a2a" stroke-width="1.1"><circle cx="6.5" cy="6.5" r="5.2"/><path d="M2.7 6.5 H10.3"/></svg>
<div class="lab" style="left:920px;top:503px;width:83px">发票代码:</div>
<div class="inp" style="left:1021px;top:497px;width:155px">请输入信息~</div>
<svg class="abs" style="left:1183.0px;top:496.0px" width="13" height="13" viewBox="0 0 13 13" fill="none" stroke="#ff2a2a" stroke-width="1.1"><circle cx="6.5" cy="6.5" r="5.2"/><path d="M2.7 6.5 H10.3"/></svg>
<div class="lab" style="left:1230px;top:503px;width:83px">开票人:</div>
<div class="sel" style="left:1331px;top:497px;width:67px">请选择</div>
<svg class="abs" style="left:1384.0px;top:509.0px" width="9" height="6" viewBox="0 0 9 6" fill="none" stroke="#888" stroke-width="1.7"><path d="M0.8 0.8 L4.5 5.0 L8.2 0.8"/></svg>
<svg class="abs" style="left:1404.0px;top:496.0px" width="13" height="13" viewBox="0 0 13 13" fill="none" stroke="#ff2a2a" stroke-width="1.1"><circle cx="6.5" cy="6.5" r="5.2"/><path d="M2.7 6.5 H10.3"/></svg>
<div class="row" style="top:534px"></div>
<svg class="abs" style="left:1523.4px;top:545.0px" width="13" height="13" viewBox="0 0 13 13" fill="none" stroke="#4686fb" stroke-width="1.0"><circle cx="6.5" cy="6.5" r="5.3"/><path d="M2.6 6.5 H10.4"/></svg>
<div class="vsep" style="left:919px;top:534px;height:38px"></div>
<div class="vsep" style="left:1229px;top:534px;height:38px"></div>
<div class="lab" style="left:609px;top:544px;width:83px">发票类型:</div>
<div class="sel" style="left:710px;top:538px;width:67px">请选择</div>
<svg class="abs" style="left:763.0px;top:550.0px" width="9" height="6" viewBox="0 0 9 6" fill="none" stroke="#888" stroke-width="1.7"><path d="M0.8 0.8 L4.5 5.0 L8.2 0.8"/></svg>
<svg class="abs" style="left:783.0px;top:537.0px" width="13" height="13" viewBox="0 0 13 13" fill="none" stroke="#ff2a2a" stroke-width="1.1"><circle cx="6.5" cy="6.5" r="5.2"/><path d="M2.7 6.5 H10.3"/></svg>
<div class="lab" style="left:919px;top:544px;width:88px">纳税人识别号:</div>
<div class="inp" style="left:1025px;top:538px;width:155px">请输入信息~</div>
<svg class="abs" style="left:1187.0px;top:537.0px" width="13" height="13" viewBox="0 0 13 13" fill="none" stroke="#ff2a2a" stroke-width="1.1"><circle cx="6.5" cy="6.5" r="5.2"/><path d="M2.7 6.5 H10.3"/></svg>
<div class="lab" style="left:1229px;top:544px;width:83px">签名:</div>
<div class="inp" style="left:1331px;top:538px;width:155px">调用手写板签名</div>
<svg class="abs" style="left:1493.0px;top:537.0px" width="13" height="13" viewBox="0 0 13 13" fill="none" stroke="#ff2a2a" stroke-width="1.1"><circle cx="6.5" cy="6.5" r="5.2"/><path d="M2.7 6.5 H10.3"/></svg>
<div class="abs" style="left:611px;top:588px;width:928px;height:110px;border:1px dashed #4686fb"></div>
<div class="abs" style="left:620px;top:580px;width:156px;height:18px;background:#fff"></div>
<div class="t b blue" style="left:655px;top:581px;font-size:14px;line-height:16px">商品明细</div>
<svg class="abs" style="left:729.5px;top:582.5px" width="13" height="13" viewBox="0 0 13 13" fill="none" stroke="#ff2a2a" stroke-width="1.1"><circle cx="6.5" cy="6.5" r="5.2"/><path d="M2.7 6.5 H10.3"/></svg>
<div class="abs" style="left:621px;top:605px;width:908px;height:42px;background:#f2f2f2;border:1px solid #e2e2e2"></div>
<div class="t b" style="left:621px;width:227px;text-align:center;top:618px;font-size:12px;color:#707070;line-height:16px">商品名称</div>
<div class="abs" style="left:848px;top:605px;width:1px;height:42px;background:#e2e2e2"></div>
<div class="t b" style="left:848px;width:227px;text-align:center;top:618px;font-size:12px;color:#707070;line-height:16px">商品数量</div>
<div class="abs" style="left:1075px;top:605px;width:1px;height:42px;background:#e2e2e2"></div>
<div class="t b" style="left:1075px;width:226px;text-align:center;top:618px;font-size:12px;color:#707070;line-height:16px">商品金额</div>
<div class="abs" style="left:1301px;top:605px;width:1px;height:42px;background:#e2e2e2"></div>
<div class="t b" style="left:1301px;width:227px;text-align:center;top:618px;font-size:12px;color:#707070;line-height:16px">商品合计</div>
<div class="abs" style="left:621px;top:646px;width:908px;height:43px;border:1px dashed #8e8e8e"></div>
<div class="inp" style="left:626px;top:654px;width:155px">请输入信息~</div>
<div class="vsep" style="left:847px;top:647px;height:41px"></div>
<div class="inp" style="left:853px;top:654px;width:155px"></div>
<div class="vsep" style="left:1074px;top:647px;height:41px"></div>
<div class="inp" style="left:1080px;top:654px;width:155px"></div>
<div class="vsep" style="left:1300px;top:647px;height:41px"></div>
<div class="inp" style="left:1306px;top:654px;width:155px"></div>
<div class="abs" style="left:1543px;top:112px;width:361px;height:727px;border-left:1px solid #dcdcdc;border-bottom:1px solid #dcdcdc;background:#fff"></div>
<div class="t" style="left:1549px;top:125px;font-size:12px;color:#666;line-height:16px">字段设置</div>
<div class="hl" style="left:1549px;top:147px;width:348px;background:#ececec"></div>
<div class="rl" style="top:162px">唯一标识</div>
<div class="ri" style="left:1644px;top:156px;width:153px;color:#000">date_20251027163332196</div>
<div class="t" style="left:1803px;top:161px;font-size:14px;color:#ff0000;line-height:14px">S</div>
<div class="rl" style="top:200px">字段标题</div>
<div class="ri" style="left:1644px;top:194px;width:155px;color:#000"><span style="position:relative;top:1px">开票日期</span></div>
<div class="rl" style="top:238px">字段名称</div>
<div class="ri" style="left:1644px;top:232px;width:155px;color:#000">kprq</div>
<div class="rl" style="top:276px">字段类型</div>
<div class="rs" style="left:1644px;top:270px;width:69px">date</div>
<svg class="abs" style="left:1698.0px;top:282.0px" width="11" height="7" viewBox="0 0 11 7" fill="none" stroke="#000" stroke-width="2"><path d="M1.0 1.0 L5.5 5.8 L10.0 1.0"/></svg>
<div class="rl" style="top:314px">字段长度</div>
<div class="ri" style="left:1644px;top:308px;width:80px;color:#000">0</div>
<div class="rl" style="top:352px">组件宽度</div>
<div class="ri" style="left:1644px;top:346px;width:80px;color:#000">120</div>
<div class="rl" style="top:390px">日期格式</div>
<div class="rs" style="left:1644px;top:384px;width:147px">yyyy-MM-dd HH:mm:ss</div>
<svg class="abs" style="left:1776.0px;top:396.0px" width="11" height="7" viewBox="0 0 11 7" fill="none" stroke="#000" stroke-width="2"><path d="M1.0 1.0 L5.5 5.8 L10.0 1.0"/></svg>
<div class="rl" style="top:428px">字段属性</div>
<div class="rs" style="left:1644px;top:422px;width:69px">非只读</div>
<svg class="abs" style="left:1698.0px;top:434.0px" width="11" height="7" viewBox="0 0 11 7" fill="none" stroke="#000" stroke-width="2"><path d="M1.0 1.0 L5.5 5.8 L10.0 1.0"/></svg>
<div class="rs" style="left:1714px;top:422px;width:70px">非必填</div>
<svg class="abs" style="left:1769.0px;top:434.0px" width="11" height="7" viewBox="0 0 11 7" fill="none" stroke="#000" stroke-width="2"><path d="M1.0 1.0 L5.5 5.8 L10.0 1.0"/></svg>
<div class="rs" style="left:1784px;top:422px;width:70px">不记忆</div>
<svg class="abs" style="left:1839.0px;top:434.0px" width="11" height="7" viewBox="0 0 11 7" fill="none" stroke="#000" stroke-width="2"><path d="M1.0 1.0 L5.5 5.8 L10.0 1.0"/></svg>
<div class="rs" style="left:1644px;top:455px;width:69px">非唯一</div>
<svg class="abs" style="left:1698.0px;top:467.0px" width="11" height="7" viewBox="0 0 11 7" fill="none" stroke="#000" stroke-width="2"><path d="M1.0 1.0 L5.5 5.8 L10.0 1.0"/></svg>
<div class="rs" style="left:1714px;top:455px;width:70px">字段显示</div>
<svg class="abs" style="left:1769.0px;top:467.0px" width="11" height="7" viewBox="0 0 11 7" fill="none" stroke="#000" stroke-width="2"><path d="M1.0 1.0 L5.5 5.8 L10.0 1.0"/></svg>
<div class="rs" style="left:1784px;top:455px;width:72px">不隐藏</div>
<svg class="abs" style="left:1841.0px;top:467.0px" width="11" height="7" viewBox="0 0 11 7" fill="none" stroke="#000" stroke-width="2"><path d="M1.0 1.0 L5.5 5.8 L10.0 1.0"/></svg>
<div class="rl" style="top:509px">帮助信息</div>
<div class="ri" style="left:1644px;top:503px;width:155px;color:#000"></div>
<div class="rl" style="top:547px">默认内容</div>
<div class="ri" style="left:1644px;top:541px;width:157px;color:#000"></div>
<div class="t" style="left:1807px;top:547px;font-size:14px;color:#ff0000;line-height:16px">配</div>
<div class="rl" style="top:585px">规则引擎</div>
<div class="ri" style="left:1644px;top:579px;width:157px;color:#000"></div>
<div class="t" style="left:1807px;top:585px;font-size:14px;color:#ff0000;line-height:16px">配</div>
<div class="rl" style="top:623px">Ai提示</div>
<div class="ri" style="left:1644px;top:617px;width:155px;color:#777">您可以设置Ai提示帮助，将</div>
<div class="btn" style="left:1563px;top:653px;width:48px;height:26px;line-height:26px;border:1px solid #6a9dfc">保存</div>
<div class="abs" style="left:1797px;top:851px;width:30px;height:8px;background:#6cb33f;border-radius:3px 0 0 0"></div>
<div class="abs" style="left:1827px;top:851px;width:77px;height:8px;background:#1c1c1c"></div>
<div class="abs" style="left:1907px;top:853px;width:3px;height:6px;background:#1c1c1c"></div>
<div class="abs" style="left:1793px;top:858px;width:127px;height:53px;background:#fff;border-radius:8px;box-shadow:0 0 40px 10px rgba(0,0,0,.07)"></div>
<div class="abs" style="left:1808px;top:865px;width:38px;height:38px;border-radius:19px;background:#383d4d"></div>
<svg class="abs" style="left:1808px;top:865px" width="38" height="38" viewBox="0 0 38 38" fill="none" stroke="#19c9a2" stroke-width="1"><circle cx="18.9" cy="15.9" r="7.2"/><path d="M11.8 13.6 A2.4 2.4 0 0 0 11.8 18.2 M26 13.6 A2.4 2.4 0 0 1 26 18.2"/><path d="M12.4 12.6 C13.5 11 14.5 12.2 15.4 10.8 C16.4 12 17.4 10.4 18.4 8 C19.4 9.6 20.6 9.4 21.6 10.8 C22.8 10.4 24.4 11.2 25.4 12.6"/><path d="M16.2 18.4 A2.9 2.9 0 0 0 21.6 18.4"/><path d="M12.6 33 H25.4 C25.4 28 23.2 25 18.9 24.4 C14.8 25 12.6 28 12.6 33 Z"/><path d="M16.6 23 L18.9 25.6 L21.2 23 M18.9 26.5 V30"/></svg>
<div class="t" style="left:1856px;top:875px;font-size:16px;color:#444;line-height:18px">流之云</div>
<div class="wm" style="left:38px;top:53px">Id:12026-03-23gadmin</div>
<div class="wm" style="left:371px;top:53px">Id:12026-03-23gadmin</div>
<div class="wm" style="left:704px;top:53px">Id:12026-03-23gadmin</div>
<div class="wm" style="left:1037px;top:53px">Id:12026-03-23gadmin</div>
<div class="wm" style="left:1370px;top:53px">Id:12026-03-23gadmin</div>
<div class="wm" style="left:1703px;top:53px">Id:12026-03-23gadmin</div>
<div class="wm" style="left:38px;top:184px">Id:12026-03-23gadmin</div>
<div class="wm" style="left:371px;top:184px">Id:12026-03-23gadmin</div>
<div class="wm" style="left:704px;top:184px">Id:12026-03-23gadmin</div>
<div class="wm" style="left:1037px;top:184px">Id:12026-03-23gadmin</div>
<div class="wm" style="left:1370px;top:184px">Id:12026-03-23gadmin</div>
<div class="wm" style="left:1703px;top:184px">Id:12026-03-23gadmin</div>
<div class="wm" style="left:38px;top:315px">Id:12026-03-23gadmin</div>
<div class="wm" style="left:371px;top:315px">Id:12026-03-23gadmin</div>
<div class="wm" style="left:704px;top:315px">Id:12026-03-23gadmin</div>
<div class="wm" style="left:1037px;top:315px">Id:12026-03-23gadmin</div>
<div class="wm" style="left:1370px;top:315px">Id:12026-03-23gadmin</div>
<div class="wm" style="left:1703px;top:315px">Id:12026-03-23gadmin</div>
<div class="wm" style="left:38px;top:446px">Id:12026-03-23gadmin</div>
<div class="wm" style="left:371px;top:446px">Id:12026-03-23gadmin</div>
<div class="wm" style="left:704px;top:446px">Id:12026-03-23gadmin</div>
<div class="wm" style="left:1037px;top:446px">Id:12026-03-23gadmin</div>
<div class="wm" style="left:1370px;top:446px">Id:12026-03-23gadmin</div>
<div class="wm" style="left:1703px;top:446px">Id:12026-03-23gadmin</div>
<div class="wm" style="left:38px;top:577px">Id:12026-03-23gadmin</div>
<div class="wm" style="left:371px;top:577px">Id:12026-03-23gadmin</div>
<div class="wm" style="left:704px;top:577px">Id:12026-03-23gadmin</div>
<div class="wm" style="left:1037px;top:577px">Id:12026-03-23gadmin</div>
<div class="wm" style="left:1370px;top:577px">Id:12026-03-23gadmin</div>
<div class="wm" style="left:1703px;top:577px">Id:12026-03-23gadmin</div>
</body></html>
